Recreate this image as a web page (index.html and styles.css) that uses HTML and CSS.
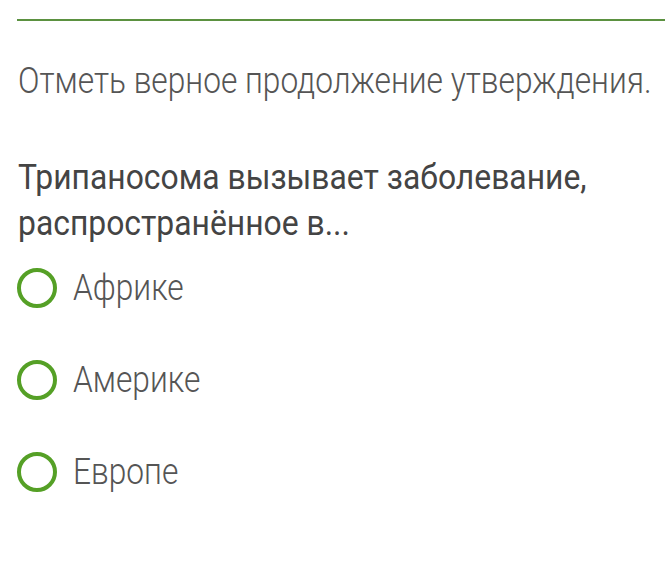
FILE: index.html
```html
<!DOCTYPE html>
<html lang="ru">
<head>
    <meta charset="UTF-8">
    <title>Тест</title>
    <link rel="stylesheet" href="styles.css">
</head>
<body>
    <div class="top-rule"></div>
    <main class="task">
        <p class="hint"><span class="narrow">Отметь верное продолжение утверждения.</span></p>
        <h2 class="question"><span class="narrow">Трипаносома вызывает заболевание,<br>распространённое в...</span></h2>
        <ul class="options">
            <li class="option"><span class="radio"></span><span class="narrow">Африке</span></li>
            <li class="option"><span class="radio"></span><span class="narrow">Америке</span></li>
            <li class="option"><span class="radio"></span><span class="narrow">Европе</span></li>
        </ul>
    </main>
</body>
</html>
```

FILE: styles.css
```css
* {
    margin: 0;
    padding: 0;
    box-sizing: border-box;
}

body {
    background: #fff;
    font-family: Roboto, "Open Sans", sans-serif;
    color: #444;
    overflow: hidden;
}

.top-rule {
    height: 2px;
    margin: 19px 0 0 17px;
    background: #5b9140;
}

.task {
    padding: 0 0 0 18px;
    overflow: hidden;
}

/* condensed look: no condensed face installed, so squeeze the text */
.narrow {
    display: inline-block;
    transform: scaleX(0.88);
    transform-origin: left center;
    white-space: nowrap;
}

.hint {
    margin-top: 38px;
    font-size: 36px;
    font-weight: 300;
    line-height: 44px;
    color: #555;
}

.question {
    margin-top: 52px;
    font-size: 35px;
    font-weight: 400;
    line-height: 46px;
    color: #444;
}

.question .narrow {
    transform: scaleX(0.91);
}

.options {
    list-style: none;
    margin-top: -5px;
}

.option {
    display: flex;
    align-items: center;
    gap: 16px;
    height: 92px;
    font-size: 36px;
    font-weight: 300;
    color: #555;
}

.radio {
    width: 40px;
    height: 40px;
    flex-shrink: 0;
    border: 4px solid #55a026;
    border-radius: 50%;
    margin-left: -1px;
}
```
